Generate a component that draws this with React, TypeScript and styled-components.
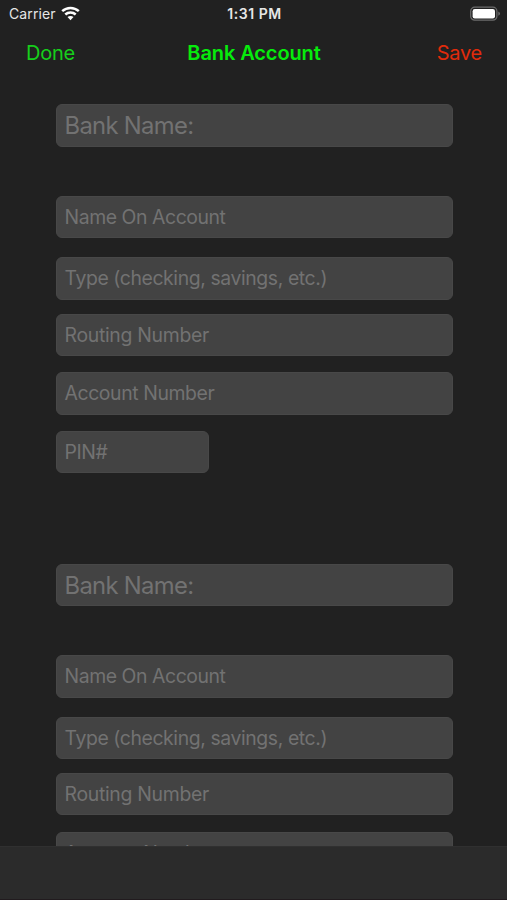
import React from "react";
import styled, { createGlobalStyle } from "styled-components";

const GlobalStyle = createGlobalStyle`
  * { box-sizing: border-box; }
  body { margin: 0; background: #212121; }
`;

const Screen = styled.div`
  width: 507px;
  height: 900px;
  display: flex;
  flex-direction: column;
  overflow: hidden;
  background: #212121;
  font-family: Inter, "Liberation Sans", sans-serif;
`;

const StatusBar = styled.header`
  height: 28px;
  flex: none;
  display: grid;
  grid-template-columns: 1fr auto 1fr;
  align-items: center;
  padding: 0 6px 0 9px;
  color: #e6e6e6;
  font-size: 14px;
  line-height: 28px;
`;

const Carrier = styled.div`
  display: flex;
  align-items: center;
  gap: 5px;
  letter-spacing: 0.1px;

  svg {
    margin-top: -2px;
  }
`;

const Clock = styled.div`
  margin-right: 1px;
  font-weight: 600;
  font-size: 14px;
  letter-spacing: 0.55px;
`;

const BatterySlot = styled.div`
  display: flex;
  justify-content: flex-end;

  svg {
    margin-top: -1px;
  }
`;

const NavBar = styled.nav`
  height: 48px;
  flex: none;
  display: grid;
  grid-template-columns: 1fr auto 1fr;
  align-items: center;
  padding: 1px 25px 0 26px;
  font-size: 20px;
  line-height: 48px;
`;

const NavAction = styled.div<{ $color: string; $end?: boolean }>`
  color: ${(p) => p.$color};
  text-align: ${(p) => (p.$end ? "right" : "left")};
  letter-spacing: -0.25px;
`;

const Title = styled.div`
  color: #06ec0c;
  font-weight: 600;
  letter-spacing: -0.1px;
`;

const Form = styled.main`
  flex: 1;
  min-height: 0;
  overflow: hidden;
  padding: 28.4px 54px 0 55.5px;
`;

const Account = styled.section`
  height: 459.4px;
`;

const Field = styled.div<{ $gap: number; $size?: number; $width?: number; $spacing?: number }>`
  height: 42.3px;
  width: ${(p) => (p.$width ? `${p.$width}px` : "100%")};
  margin-bottom: ${(p) => p.$gap}px;
  padding-left: 8px;
  border: 1px solid #484848;
  border-radius: 6px;
  background: #434343;
  color: #727272;
  font-size: ${(p) => p.$size ?? 19.4}px;
  letter-spacing: ${(p) => p.$spacing ?? -0.4}px;
  line-height: 41.5px;
  white-space: nowrap;
`;

const Toolbar = styled.footer`
  height: 54px;
  flex: none;
  background: #2b2b2b;
  border-top: 1px solid #303030;
  border-bottom: 1px solid #211b1e;
`;

const WifiIcon = () => (
  <svg width="19" height="15" viewBox="0 0 19 15" fill="none" stroke="#fff" strokeWidth="2.5">
    <path d="M1.2 5.2C5.9 .8 13.1 .8 17.8 5.2" />
    <path d="M4.3 8.5C7.2 5.8 11.8 5.8 14.7 8.5" />
    <path d="M9.5 14.3 6.5 11.1C8.2 9.6 10.8 9.6 12.5 11.1Z" fill="#fff" stroke="none" />
  </svg>
);

const BatteryIcon = () => (
  <svg width="31" height="16" viewBox="0 0 31 16">
    <rect x=".7" y="1.2" width="26.2" height="13" rx="4" fill="none" stroke="#6c6c6c" strokeWidth="1.2" />
    <rect x="2.6" y="3" width="22.4" height="9.4" rx="2.2" fill="#fff" />
    <path d="M28.3 5.6Q31.8 7.7 28.3 9.8Z" fill="#6c6c6c" />
  </svg>
);

const AccountForm = () => (
  <Account>
    <Field $gap={49.4} $size={23.8} $spacing={-0.68}>Bank Name:</Field>
    <Field $gap={18.9} $spacing={-0.43}>Name On Account</Field>
    <Field $gap={14}>Type (checking, savings, etc.)</Field>
    <Field $gap={16.4} $spacing={-0.3}>Routing Number</Field>
    <Field $gap={16.4}>Account Number</Field>
    <Field $gap={0} $width={153.4}>PIN#</Field>
  </Account>
);

export default function App() {
  return (
    <Screen>
      <GlobalStyle />
      <StatusBar>
        <Carrier>
          <span>Carrier</span>
          <WifiIcon />
        </Carrier>
        <Clock>1:31 PM</Clock>
        <BatterySlot>
          <BatteryIcon />
        </BatterySlot>
      </StatusBar>
      <NavBar>
        <NavAction $color="#16cf1b">Done</NavAction>
        <Title>Bank Account</Title>
        <NavAction $color="#e22b0b" $end>Save</NavAction>
      </NavBar>
      <Form>
        <AccountForm />
        <AccountForm />
      </Form>
      <Toolbar />
    </Screen>
  );
}
